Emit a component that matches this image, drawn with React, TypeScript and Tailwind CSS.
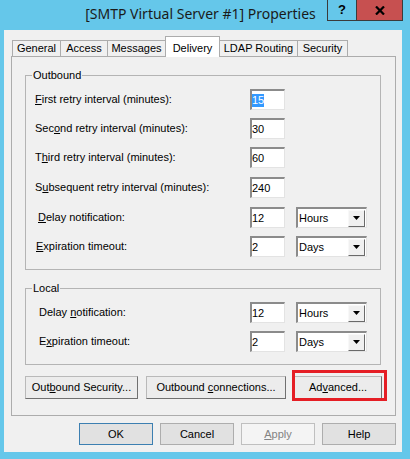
import React from "react";

const sans = "font-['Liberation_Sans',Arial,sans-serif]";

function U({ children }: { children: React.ReactNode }) {
  return <span className="underline underline-offset-[1px]">{children}</span>;
}

function TextBox({ value, selected }: { value: string; selected?: boolean }) {
  return (
    <div className="w-[35px] h-[21px] shrink-0 bg-white border-t-2 border-l-2 border-r border-b border-t-[#8b8b8b] border-l-[#8b8b8b] border-r-[#e3e3e3] border-b-[#e3e3e3] flex items-center text-[11px] leading-[13px] text-black">
      {selected ? <span className="bg-[#3399ff] text-white">{value}</span> : <span>{value}</span>}
    </div>
  );
}

function Combo({ value }: { value: string }) {
  return (
    <div className="ml-[11px] w-[71px] h-[21px] shrink-0 bg-white border-t-2 border-l-2 border-r border-b border-t-[#8b8b8b] border-l-[#8b8b8b] border-r-[#e3e3e3] border-b-[#e3e3e3] flex items-center">
      <span className="flex-1 pl-[1px] text-[11px] leading-[13px] text-black">{value}</span>
      <div className="w-[17px] h-[17px] bg-[#f0f0f0] border border-t-[#f8f8f8] border-l-[#f8f8f8] border-r-[#6a6a6a] border-b-[#6a6a6a] flex items-center justify-center mr-[1px]">
        <svg width="7" height="4" viewBox="0 0 7 4">
          <path d="M0 0H7L3.5 4Z" fill="#000" />
        </svg>
      </div>
    </div>
  );
}

type Row = { label: React.ReactNode; value: string; unit?: string; sel?: boolean; cls: string };

const outbound: Row[] = [
  { label: <><U>F</U>irst retry interval (minutes):</>, value: "15", sel: true, cls: "mt-[7px] pl-[9px]" },
  { label: <>Sec<U>o</U>nd retry interval (minutes):</>, value: "30", cls: "mt-[8px] pl-[9px]" },
  { label: <>T<U>h</U>ird retry interval (minutes):</>, value: "60", cls: "mt-[8px] pl-[9px]" },
  { label: <>S<U>u</U>bsequent retry interval (minutes):</>, value: "240", cls: "mt-[9px] pl-[9px]" },
  { label: <><U>D</U>elay notification:</>, value: "12", unit: "Hours", cls: "mt-[9px] pl-[12px]" },
  { label: <><U>E</U>xpiration timeout:</>, value: "2", unit: "Days", cls: "mt-[8px] pl-[10px]" },
];

const local: Row[] = [
  { label: <>Delay <U>n</U>otification:</>, value: "12", unit: "Hours", cls: "mt-[7px] pl-[13px]" },
  { label: <>E<U>x</U>piration timeout:</>, value: "2", unit: "Days", cls: "mt-[8px] pl-[13px]" },
];

function Rows({ rows }: { rows: Row[] }) {
  return (
    <>
      {rows.map((r, i) => (
        <div key={i} className={`flex items-center h-[21px] ${r.cls}`}>
          <span className="flex-1 whitespace-nowrap text-[11px] text-black">{r.label}</span>
          <div className="w-[130px] flex items-center shrink-0">
            <TextBox value={r.value} selected={r.sel} />
            {r.unit && <Combo value={r.unit} />}
          </div>
        </div>
      ))}
    </>
  );
}

const tabs = [
  { name: "General", w: "w-[49px]" },
  { name: "Access", w: "w-[48px]" },
  { name: "Messages", w: "w-[59px]" },
  { name: "Delivery", w: "w-[55px]", active: true },
  { name: "LDAP Routing", w: "w-[79px]" },
  { name: "Security", w: "w-[51px]" },
];

function PageButton({ children, w }: { children: React.ReactNode; w: string }) {
  return (
    <div className={`${w} h-[23px] bg-[#ececec] border border-[#b9b9b9] border-r-[#707070] border-b-[#707070] flex items-center justify-center text-[11px] text-black`}>
      <span className="whitespace-pre">{children}</span>
    </div>
  );
}

export default function App() {
  return (
    <div className={`w-[410px] h-[459px] bg-[#65c7ea] flex flex-col ${sans}`}>
      {/* title bar */}
      <div className="h-[30px] flex items-start shrink-0">
        <div className="flex-1 pl-[74px] pt-[4px] text-center text-[14px] leading-[20px] text-[#1a1a1a] font-['Noto_Sans',sans-serif]">
          [SMTP Virtual Server #1] Properties
        </div>
        <div className="flex mr-[7px]">
          <div className="w-[30px] h-[21px] border border-t-0 border-[#3b3b3b] flex items-center justify-center text-[13px] font-bold text-black">
            ?
          </div>
          <div className="w-[47px] h-[21px] -ml-px bg-[#c75050] border border-t-0 border-[#3b3b3b] flex items-center justify-center">
            <svg width="10" height="9" viewBox="0 0 10 9">
              <path d="M1 0.5L9 8.5M9 0.5L1 8.5" stroke="#000" strokeWidth="2.2" />
            </svg>
          </div>
        </div>
      </div>

      {/* client area */}
      <div className="ml-[4px] mr-[8px] h-[422px] bg-[#f0f0f0] flex flex-col">
        <div className="flex items-end h-[20px] mt-[6px] ml-[8px]">
          {tabs.map((t, i) =>
            t.active ? (
              <div
                key={t.name}
                className={`${t.w} -ml-px h-[21px] -mb-px relative z-10 bg-white border-t border-l border-r border-[#acacac] flex items-start pt-[3px] justify-center text-[11px] text-black`}
              >
                {t.name}
              </div>
            ) : (
              <div
                key={t.name}
                className={`${t.w} ${i > 0 ? "-ml-px" : ""} h-[16px] bg-[#f0f0f0] border-t border-l border-r border-[#acacac] flex items-center justify-center text-[11px] text-black`}
              >
                {t.name}
              </div>
            )
          )}
        </div>

        {/* property page */}
        <div className="ml-[7px] w-[385px] h-[360px] border border-[#acacac] bg-[#f0f0f0] flex flex-col">
          <fieldset className="ml-[13px] mt-[12px] w-[356px] border border-[#b4b4b4] pb-[12px] flex flex-col">
            <legend className="ml-[6px] px-[1px] text-[11px] leading-[13px] text-black">Outbound</legend>
            <Rows rows={outbound} />
          </fieldset>

          <fieldset className="ml-[13px] mt-[12px] w-[356px] border border-[#b4b4b4] pb-[12px] flex flex-col">
            <legend className="ml-[6px] px-[1px] text-[11px] leading-[13px] text-black">Local</legend>
            <Rows rows={local} />
          </fieldset>

          <div className="flex mt-[11px] ml-[13px] gap-[8px]">
            <PageButton w="w-[113px]">
              Out<U>b</U>ound Security...
            </PageButton>
            <PageButton w="w-[140px]">
              Outbound <U>c</U>onnections...
            </PageButton>
            <div className="relative">
              <PageButton w="w-[88px]">
                Ad<U>v</U>anced...
              </PageButton>
              <div className="absolute -left-[2px] -top-[6px] -right-[5px] -bottom-[2px] border-[3px] border-[#e51e25]" />
            </div>
          </div>
        </div>

        <div className="flex gap-[7px] ml-[75px] mt-[7px]">
          <div className="w-[74px] h-[22px] bg-[#e1e1e1] border border-[#3c7fb1] flex items-center justify-center text-[11px] text-black">
            OK
          </div>
          <div className="w-[74px] h-[22px] bg-[#e1e1e1] border border-[#adadad] flex items-center justify-center text-[11px] text-black">
            Cancel
          </div>
          <div className="w-[74px] h-[22px] bg-[#f4f4f4] border border-[#bfbfbf] flex items-center justify-center text-[11px] text-[#838383]">
            <span>
              <U>A</U>pply
            </span>
          </div>
          <div className="w-[74px] h-[22px] bg-[#e1e1e1] border border-[#adadad] flex items-center justify-center text-[11px] text-black">
            Help
          </div>
        </div>
      </div>
    </div>
  );
}
